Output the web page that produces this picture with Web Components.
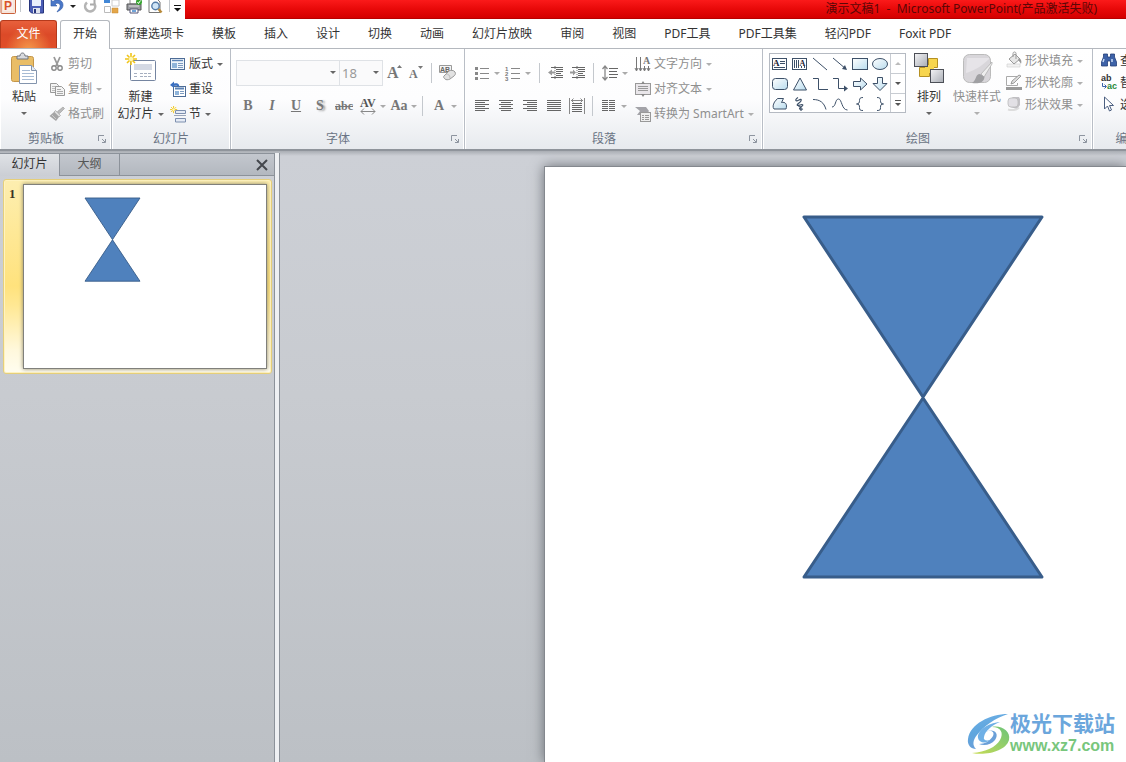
<!DOCTYPE html>
<html lang="zh-CN">
<head>
<meta charset="utf-8">
<title>演示文稿1 - Microsoft PowerPoint</title>
<style>
html, body { height: 100%; }
body { margin: 0; overflow: hidden; font: 12px/17px "Noto Sans", "Noto Sans CJK SC", sans-serif; color: #333; }
</style>
</head>
<body>
<ppt-app></ppt-app>
<script>
const lines = (rows, color = '#666') => rows.map(([x, y, w]) => `<path d="M${x} ${y + .5}h${w}" stroke="${color}"/>`).join('');
const SKY = `<linearGradient id="s" x2="1" y2="1"><stop stop-color="#fff"/><stop offset="1" stop-color="#b9dcee"/></linearGradient>`;
const GREY = `<linearGradient id="g" x2="1" y2="1"><stop stop-color="#f4f4f6"/><stop offset="1" stop-color="#a9adb5"/></linearGradient>`;
const SPARK = `<path d="M6 0v12M0 6h12M2 2l8 8M10 2l-8 8" stroke="#f0c419" stroke-width="1.6"/><circle cx="6" cy="6" r="2.2" fill="#fff7b0"/>`;
const INK = '#3d5068';

/* name: [width, height, markup] */
const ICONS = {
  logo: [16, 14, `<rect x="1" y="-2" width="14.5" height="15.5" rx="1" fill="#f7e4da" stroke="#c9603a"/><path d="M3 0h10v11H3z" fill="#fbeee6"/><text x="4" y="10" font-family="Liberation Sans" font-weight="bold" font-size="12" fill="#d9532a">P</text>`],
  save: [15, 14, `<path d="M.5-1h14v14H2.500l-2-2z" fill="#4a5cb5" stroke="#27357c"/><path d="M3-1h9v7H3z" fill="#e9eefb"/><path d="M4 8h7v5H4z" fill="#dfe3ee"/><path d="M5 9h2v4H5z" fill="#27357c"/>`],
  undo: [14, 14, `<path d="M1 0v6h6L5 4c3-2 6 0 5 3-.5 2-2 3-3 5 4-2 6-4 6-7C13 0 7-2 3 1.500z" fill="#4a78c8" stroke="#2e58a5" stroke-width=".6"/>`],
  redo: [14, 14, `<path d="M10.500 0v4.500H6" fill="none" stroke="#aaa" stroke-width="2"/><path d="M10.500 4A5 5 0 1 1 3 2.500" fill="none" stroke="#b4b4b4" stroke-width="2.600"/>`],
  blocks: [16, 14, `<path d="M0-1h6v4H0z" fill="#4287d6"/><path d="M8 0h7v6H8z" fill="#fff" stroke="#ccc"/><path d="M.5 6.500h6v6h-6z" fill="#fff" stroke="#bbb"/><path d="M8 8h6v5H8z" fill="#e4a649" stroke="#c78a32" stroke-width=".5"/>`],
  print: [16, 14, `<path d="M4-1h8v5H4z" fill="#fff" stroke="#888"/><path d="M1 4h14v6H1z" fill="#9b9ca2" stroke="#555"/><path d="M3 6h10" stroke="#ddd"/><path d="M4 9h8v4H4z" fill="#fff" stroke="#557"/><path d="M6 11h4" stroke="#6fa3d8" stroke-width="2"/><circle cx="13" cy="2" r="3" fill="#36a42f"/><path d="M11.500 2l1 1.500 2-3" stroke="#fff" fill="none"/>`],
  preview: [15, 14, `<path d="M1-1h8l3 3v10.500H1z" fill="#fff" stroke="#777"/><circle cx="7.500" cy="6" r="3.700" fill="#cfe5f7" stroke="#557ca8" stroke-width="1.400"/><path d="M10.500 9l3 3.500" stroke="#b88a3a" stroke-width="2.400"/>`],
  more: [7, 12, `<path d="M0 4.500h7" stroke="#111"/><path d="M0 7h7L3.500 10.500z" fill="#111"/>`],

  paste: [30, 32, `<rect x="2.500" y="3.500" width="22" height="25" rx="2" fill="#e9bd66" stroke="#c4964a"/><path d="M8 6V3h3c0-4 5-4 5 0h3v3z" fill="#d8dade" stroke="#70747c"/><path d="M10.500 12.500h12l5 5v13h-17z" fill="#fff" stroke="#8394ad"/><path d="M22.500 12.500v5h5" fill="#e4ebf5" stroke="#8394ad"/>${lines([[13,17,8],[13,20,12],[13,23,12],[13,26,12]], '#a7bbd4')}`],
  cut: [16, 16, `<path d="M5 1l4 9M11 1L7 10" stroke="#999" stroke-width="1.800"/><circle cx="5" cy="12" r="2.200" fill="none" stroke="#888" stroke-width="1.400"/><circle cx="11" cy="12" r="2.200" fill="none" stroke="#888" stroke-width="1.400"/>`],
  copy: [16, 16, `<path d="M1.500 2.500h6l2 2v7h-8z" fill="#f4f4f4" stroke="#999"/>${lines([[3,5,4],[3,7,4],[3,9,4]], '#bbb')}<path d="M6.500 5.500h6l3 3v6h-9z" fill="#f4f4f4" stroke="#999"/>${lines([[8,8,4],[8,10,6],[8,12,6]], '#aaa')}`],
  brush: [16, 16, `<path d="M14 1l1.500 1.500-5 5-2-2z" fill="#bbb" stroke="#999" stroke-width=".6"/><path d="M6.500 4.500l5 5-1.500 1.500-5-5z" fill="#ddd" stroke="#999" stroke-width=".6"/><path d="M5 6l5 5-3 4-6.500-5z" fill="#a5a5a5"/><path d="M3 9l4 4" stroke="#ccc"/>`],
  newslide: [32, 32, `<rect x="5.500" y="7.500" width="25" height="20" rx="1" fill="#fff" stroke="#7484a0"/><rect x="9" y="11" width="18" height="6" fill="#d4d9e4"/><path d="M9 20.500h4m2 0h12M9 23.500h4m2 0h12" stroke="#a6afc0" stroke-dasharray="3 1"/>${SPARK}`],
  layout: [16, 16, `<rect x=".5" y="2.500" width="14" height="11" fill="#eef4fb" stroke="#4d6c96"/><path d="M2 4.500h11" stroke="#5b83b6" stroke-width="1.400"/><path d="M2 7h5v5H2z" fill="#8fb4da"/>${lines([[8,7,5],[8,9,5],[8,11,5]], '#7d9bc0')}`],
  reset: [16, 16, `<rect x="3.500" y="5.500" width="12" height="10" fill="#fff" stroke="#4d6c96"/><path d="M5 7.500h9" stroke="#5b83b6" stroke-width="2"/><path d="M5 10h4v4H5z" fill="#8fb4da"/>${lines([[10,10,4],[10,12,4]], '#7d9bc0')}<path d="M0 4l4-3.500v2c4-1 6 1 5 4-1-2-3-2-5-1.500v2z" fill="#3a6fc0"/>`],
  section: [16, 16, `<g transform="scale(.6)">${SPARK}</g><path d="M5.500 3.500h10v3h-10zM5.500 11.500h10v3.500h-10z" transform="translate(0 1)" fill="#e5ebf5" stroke="#7d8fae"/><path d="M4 9.500h12" stroke="#9ba6ba"/>`],

  grow: [16, 18, `<text x="1" y="14" font-family="Liberation Serif" font-weight="bold" font-size="16" fill="#777">A</text><path d="M11 4h5l-2.500-3z" fill="#777"/>`],
  shrink: [16, 18, `<text x="1" y="14" font-family="Liberation Serif" font-weight="bold" font-size="12" fill="#777">A</text><path d="M10 2h5l-2.500 3z" fill="#777"/>`],
  clear: [18, 18, `<path d="M1.500 1.500h12v7h-12z" fill="#f4f4f4" stroke="#999"/><text x="2" y="8" font-family="Liberation Sans" font-weight="bold" font-size="7" fill="#666">AB</text><path d="M6 12l5-5c1-1 5-1 6 1s0 3-1 4l-4 3c-2 1-4 1-5 0s-2-2-1-3z" fill="#e2e2e2" stroke="#999"/><path d="M8 10c2 0 4 1 4 4" stroke="#bbb" fill="none"/>`],
  spacing: [18, 18, `<text x="1" y="10" font-family="Liberation Serif" font-size="12" fill="#555">AV</text><path d="M2 14.500h14M5 11.500l-3 3 3 3M13 11.500l3 3-3 3" stroke="#888" fill="none"/>`],

  bullets: [16, 16, [2,7,12].map(y => `<path d="M1 ${y}h3v3H1z" fill="#888"/><path d="M6 ${y + 1.500}h9" stroke="#888"/>`).join('')],
  numbers: [16, 16, [1,2,3].map(n => `<text x="0" y="${n * 5 + .5}" font-family="Liberation Sans" font-weight="bold" font-size="6" fill="#777">${n}</text><path d="M6 ${n * 5 - 1.500}h9" stroke="#888"/>`).join('')],
  outdent: [16, 16, `${lines([[3,2,12],[8,4,7],[8,6,7],[8,8,5],[8,10,7],[3,12,12]])}<path d="M7 1v14" stroke="#777" stroke-dasharray="1 1"/><path d="M0 7.500l4-3v2h3v2H4v2z" fill="#999"/>`],
  indent: [16, 16, `${lines([[2,2,13],[8,4,7],[8,6,7],[8,8,5],[8,10,7],[2,12,13]])}<path d="M7 1v14" stroke="#777" stroke-dasharray="1 1"/><path d="M6 7.500l-3-3v2H0v2h3v2z" fill="#999"/>`],
  linespace: [16, 16, `${lines([[7,3,9],[7,6,8],[7,9,9],[7,12,8]])}<path d="M3 1v14M.5 4L3 1l2.500 3M.5 12L3 15l2.500-3" stroke="#888" stroke-width="1.300" fill="none"/>`],
  left: [16, 16, lines([[1,2,14],[1,4,10],[1,6,14],[1,8,10],[1,10,14],[1,12,10]])],
  center: [16, 16, lines([[1,2,14],[3,4,10],[1,6,14],[3,8,10],[1,10,14],[3,12,10]])],
  right: [16, 16, lines([[1,2,14],[5,4,10],[1,6,14],[5,8,10],[1,10,14],[5,12,10]])],
  justify: [16, 16, lines([[1,2,14],[1,4,14],[1,6,14],[1,8,14],[1,10,14],[1,12,14]])],
  spread: [16, 16, `${lines([[3,5,10],[3,7,10],[3,9,10],[3,11,10],[3,13,10]])}<path d="M.5 0v16M15.500 0v16M2 2.500h12M4.500.5l-2 2 2 2M11.500.5l2 2-2 2" stroke="#888" fill="none"/>`],
  columns: [16, 16, lines([2,4,6,8,10,12].flatMap(y => [[1,y,6],[8,y,6]]))],
  textdir: [16, 16, `<path d="M1.500 1v13M5.500 1v13M9.500 10v4M13.500 10v4M0 12l1.500 3L3 12M4 12l1.500 3L7 12M8 12l1.500 3L11 12M12 12l1.500 3 1.500-3" stroke="#777" fill="none"/><text x="8" y="8" font-family="Liberation Serif" font-weight="bold" font-size="10" fill="#777">A</text>`],
  aligntext: [16, 16, `<rect x=".5" y="2.500" width="15" height="11" fill="#e9e6ea" stroke="#999"/>${lines([[3,5,10],[3,7,10],[3,9,10]], '#999')}<path d="M6 3l2-3 2 3zM6 13l2 3 2-3z" fill="#888"/>`],
  smartart: [16, 16, `<path d="M0 1h11l3 4-3 4H2l3-4z" fill="#a3a3a8"/><rect x="5.500" y="6.500" width="10" height="9" fill="#eee" stroke="#999"/>${lines([[7,9,2],[10,9,4],[7,11,2],[10,11,4],[7,13,2],[10,13,4]], '#999')}`],

  'g-text': [18, 16, `<rect x="1.500" y="2.500" width="14" height="11" fill="#fff" stroke="${INK}"/><text x="2" y="10" font-family="Liberation Serif" font-weight="bold" font-size="9" fill="#223">A</text>${lines([[9,5,5],[9,7,5],[3,11,11]], INK)}`],
  'g-vtext': [18, 16, `<rect x="1.500" y="2.500" width="14" height="11" fill="#fff" stroke="${INK}"/><path d="M3.500 4v8M5.500 4v8M7.500 4v8M10.500 10v2M13.500 10v2" stroke="${INK}"/><text x="8.500" y="10" font-family="Liberation Serif" font-weight="bold" font-size="8" fill="#223">A</text>`],
  'g-line': [18, 16, `<path d="M2 2l14 12" stroke="${INK}"/>`],
  'g-arrow': [18, 16, `<path d="M2 2l13 11" stroke="${INK}"/><path d="M16 14l-5-1 3-4z" fill="${INK}"/>`],
  'g-rect': [18, 16, `${SKY}<rect x="1.500" y="2.500" width="15" height="11" fill="url(#s)" stroke="${INK}"/>`],
  'g-oval': [18, 16, `${SKY}<ellipse cx="9" cy="8" rx="7.500" ry="5.500" fill="url(#s)" stroke="${INK}"/>`],
  'g-round': [18, 16, `${SKY}<rect x="1.500" y="2.500" width="15" height="11" rx="3" fill="url(#s)" stroke="${INK}"/>`],
  'g-tri': [18, 16, `${SKY}<path d="M9 2l6.500 12h-13z" fill="url(#s)" stroke="${INK}"/>`],
  'g-elbow': [18, 16, `<path d="M2 2.500h5.500v11H17" fill="none" stroke="${INK}"/>`],
  'g-elbowarrow': [18, 16, `<path d="M2 2.500h5.500v10H15" fill="none" stroke="${INK}"/><path d="M13 9.500l4 3-4 3z" fill="${INK}"/>`],
  'g-right': [18, 16, `${SKY}<path d="M2.500 5.500h7V2l6.500 6-6.500 6v-3.500h-7z" fill="url(#s)" stroke="${INK}"/>`],
  'g-down': [18, 16, `${SKY}<path d="M6.500 1.500h5v6H16L9 14.500 2 7.500h4.500z" fill="url(#s)" stroke="${INK}"/>`],
  'g-free': [18, 16, `${SKY}<path d="M3.500 6l3-3.500h6l-2 4c4-1 6 2 4.500 6.500h-12c-1.500-2-1-4 .5-7z" fill="url(#s)" stroke="${INK}"/>`],
  'g-scribble': [18, 16, `<path d="M7 1.500C3 4 5 6 8 4s3 1 0 3-2 3 1 2 4 0 1 2-1 3 2 2M7 10c4 0 3 3 3 5" fill="none" stroke="${INK}" stroke-width="1.200"/>`],
  'g-arc': [18, 16, `<path d="M2 3.500c7 0 11 3 13 10" fill="none" stroke="${INK}"/>`],
  'g-curve': [18, 16, `<path d="M1 11C5 11 4 3 7.500 3s3 11 9 11" fill="none" stroke="${INK}"/>`],
  'g-lbrace': [18, 16, `<path d="M12 1.500c-3 0-3.500 1-3.500 3S8 8 5.500 8C8 8 8.500 9 8.500 11.500s.5 3 3.500 3" fill="none" stroke="${INK}"/>`],
  'g-rbrace': [18, 16, `<path d="M6 1.500c3 0 3.500 1 3.500 3S10 8 12.500 8C10 8 9.500 9 9.500 11.500s-.5 3-3.500 3" fill="none" stroke="${INK}"/>`],
  arrange: [32, 32, `${GREY}<path d="M15.500 5.500h9v9h-9zM6.500 14.500h10v9h-10z" fill="#f7d54e" stroke="#b59022"/><path d="M12 12h9v8h-9z" fill="#f7d54e"/><rect x="1.500" y=".5" width="13" height="13" fill="url(#g)" stroke="#4c4f57"/><rect x="17.500" y="16.500" width="13" height="13" fill="url(#g)" stroke="#4c4f57"/>`],
  styles: [32, 32, `<rect x="2.500" y="1.500" width="27" height="28" rx="6" fill="#d8d6da" stroke="#bbb"/><path d="M5 20C12 18 20 14 28 6v-1H6z" fill="#e6e4e8"/><path d="M31 9L20 21l3 3 8-13z" fill="#eee" stroke="#aaa" stroke-width=".7"/><path d="M19 21c-5 0-3 6-8 9 6 1 12 0 12.500-6z" fill="#a0a0a3"/>`],
  fill: [16, 16, `<path d="M2 13h13v3H2z" transform="translate(-1 -1)" fill="#f2f2f2" stroke="#ccc" stroke-width=".6"/><path d="M3 7l6-5 5 5-6 5z" fill="#e6e6e6" stroke="#999"/><path d="M7 5V1.500c0-2 3-2 3 0V7" fill="none" stroke="#999"/><path d="M13 6c2 1 3 3 2 6-1-2-2-3-3-4z" fill="#999"/>`],
  outline: [16, 16, `<path d="M0 13h16v3H0z" fill="#999"/><path d="M11 2.500H.5v9h11V9" fill="none" stroke="#aaa"/><path d="M5 10l1-3 7-6 2 1-7 7z" fill="#ddd" stroke="#888" stroke-width=".8"/>`],
  effects: [16, 16, `<path d="M4 3l3-2h6l1 2v6l-3 4-7-2z" fill="#c2c0c5"/><rect x="2" y="2" width="10" height="9" rx="3" fill="#e2e0e5" stroke="#bbb" stroke-width=".8"/><path d="M2 13.500c3 1 9 1 11-2" stroke="#ddd" stroke-width="2" fill="none"/>`],
  find: [16, 16, `<path d="M2.500 2h4v3h3V2h4v3l2 5v4h-6V9h-3v5h-6v-4l2-5z" fill="#3d62a8" stroke="#253f78" stroke-width=".8"/><path d="M3 7l-1 3M11 7v3" stroke="#c9dbf5" stroke-width="1.500"/>`],
  replace: [16, 16, `<text x="0" y="7" font-family="Liberation Sans" font-weight="bold" font-size="9" fill="#333">ab</text><text x="6" y="15" font-family="Liberation Sans" font-weight="bold" font-size="9" fill="#2a8a3a">ac</text><path d="M1.500 9v3.500H5M3.500 10.500l2 2-2 2" stroke="#3b63a8" fill="none"/>`],
  pointer: [16, 16, `<path d="M3.500 1v12l3-3 2 5 2-1-2-4.500h4z" fill="#fff" stroke="#4c5f80"/>`],
  close: [12, 12, `<path d="M1 1l10 10M11 1L1 11" stroke="#44474d" stroke-width="2"/>`],
  launcher: [8, 8, `<path d="M.5 6V.5H6M4 4l3 3M7.500 4v3.500H4" fill="none" stroke="#8d949f"/>`],
  swirl: [44, 44, `<linearGradient id="w" x1="0" y1="0" x2=".3" y2="1"><stop stop-color="#6fb0e6"/><stop offset=".55" stop-color="#5fa6de"/><stop offset="1" stop-color="#6a9fd8"/></linearGradient><linearGradient id="v" x1="1" x2="0" y2="1"><stop stop-color="#6cc47a"/><stop offset="1" stop-color="#c9dc55"/></linearGradient><path d="M42 2C24 2 4 12 2 27c-1 6 3 10 8 10-4-4-3-9 1-14C18 14 29 6 42 2z" fill="url(#w)"/><path d="M34 10C21 11 11 19 12 26c1 5 8 6 12 2-4 1-7 0-6-3 1-6 8-12 16-15z" fill="#6fb0e6"/><path d="M20 20c5-3 9 0 7 4-3 5-8 8-14 8 5 2 12 1 16-4 5-7-2-12-9-8z" fill="#6a9fd8"/><path d="M26 15c9 0 12 6 8 13-4 7-14 12-28 13 14 3 34-2 37-13 2-9-8-15-17-13z" fill="url(#v)"/>`],
};

function define(name, html, setup) {
  const template = document.createElement('template');
  template.innerHTML = html;
  customElements.define(name, class extends HTMLElement {
    constructor() {
      super();
      this.attachShadow({ mode: 'open' }).append(template.content.cloneNode(true));
    }
    connectedCallback() { if (setup) setup(this, this.shadowRoot); }
  });
}

define('ui-icon', `<style>:host{display:block;flex:none}svg{display:block;overflow:visible}</style><svg fill="none" aria-hidden="true"></svg>`, (el, root) => {
  const [w, h, body] = ICONS[el.getAttribute('name')];
  const svg = root.querySelector('svg');
  svg.setAttribute('width', w);
  svg.setAttribute('height', h);
  svg.setAttribute('viewBox', `0 0 ${w} ${h}`);
  svg.innerHTML = body;
});

define('ui-arrow', `<style>:host{display:inline-block;flex:none;width:0;height:0;border:3px solid transparent;border-top-color:currentColor;border-bottom:0;vertical-align:middle}</style>`);

/* Separator between tools */
define('ui-sep', `<style>:host{display:block;flex:none;width:1px;height:20px;background:#c4c8cd}</style>`);

/* Icon above text, or icon beside text */
define('ribbon-button', `<style>
:host{display:block}
button{display:flex;align-items:center;gap:3px;height:var(--row,25px);padding:0 0 0 1px;border:0;background:none;font:inherit;color:#333;white-space:nowrap}
:host([large]) button{flex-direction:column;width:100%;height:auto;padding:5px 0 0}
:host([large]) .text{text-align:center;white-space:pre-line}
button:disabled{color:#8f8f8f}
ui-arrow{margin-left:4px;color:#666}
button:disabled ui-arrow{color:#b0b0b0}
:host(:not([menu])) ui-arrow{display:none}
:host([below]) ui-arrow{display:block;margin:7px auto 0}
</style><button type="button"><span class="text"><slot></slot><ui-arrow></ui-arrow></span></button>`, (el, root) => {
  const icon = document.createElement('ui-icon');
  icon.setAttribute('name', el.getAttribute('icon'));
  const button = root.querySelector('button');
  button.prepend(icon);
  button.disabled = el.hasAttribute('off');
});

/* Compact tool without a caption; its glyph is slotted */
define('tool-button', `<style>
:host{display:block;flex:none}
button{display:flex;align-items:center;height:24px;padding:0;border:0;background:none;color:#777;font:bold 14px/24px "Liberation Serif",serif}
.glyph{display:flex;justify-content:center;width:var(--tool,24px)}
ui-arrow{color:#aaa;margin-right:1px}
:host(:not([menu])) ui-arrow{display:none}
</style><button type="button" disabled><span class="glyph"><slot></slot></span><ui-arrow></ui-arrow></button>`, (el, root) => {
  root.querySelector('button').setAttribute('aria-label', el.getAttribute('label'));
});

define('ribbon-group', `<style>
:host{display:flex;flex-direction:column;flex:none;box-sizing:border-box;border-right:1px solid #b9bec6;box-shadow:inset -1px 0 #fff,inset 1px 0 #fff}
.body{display:flex;flex:none;height:80px}
footer{display:flex;align-items:center;gap:6px;height:21px;padding-right:5px;color:#6a7484}
button{display:block;padding:0;border:0;background:none}
:host([plain]) footer{padding:0}
:host([plain]) button{display:none}
.name{flex:1;text-align:center}
</style><div class="body"><slot></slot></div><footer><span class="name"></span><button type="button"><ui-icon name="launcher"></ui-icon></button></footer>`, (el, root) => {
  root.querySelector('.name').textContent = el.getAttribute('label');
  root.querySelector('button').setAttribute('aria-label', el.getAttribute('label') + '选项');
});

define('combo-box', `<style>
:host{display:block;flex:none}
label{display:flex;align-items:center;position:relative}
select{appearance:none;box-sizing:border-box;width:100%;height:26px;margin:0;padding:0 2px;border:1px solid #dfe2e6;border-radius:0;background:#fafafb;font:13px/17px "Noto Sans",sans-serif;color:#999;opacity:1}
ui-arrow{position:absolute;right:4px;top:11px;color:#666}
</style><label><select disabled><option></option></select><ui-arrow></ui-arrow></label>`, (el, root) => {
  root.querySelector('option').textContent = el.getAttribute('value');
  root.querySelector('select').setAttribute('aria-label', el.getAttribute('label'));
});

define('shape-gallery', `<style>
:host{display:flex;flex:none;box-sizing:border-box;height:60px;border:1px solid #b5bac2;background:#fff}
.cells{display:grid;grid-template-columns:repeat(6,20px);grid-auto-rows:20px}
.scroll{display:grid;grid-template-rows:20px 20px 18px;width:14px;border-left:1px solid #c8ccd2}
button{display:grid;place-items:center;padding:0;border:0;background:none;color:#555}
.scroll button{border-bottom:1px solid #c8ccd2}
.scroll button:last-child{border-bottom:0}
.up{transform:rotate(180deg);color:#bbb}
.all{display:grid;border-top:1px solid;padding-top:2px}
</style><div class="cells"></div><div class="scroll"><button type="button" aria-label="上一行"><ui-arrow class="up"></ui-arrow></button><button type="button" aria-label="下一行"><ui-arrow></ui-arrow></button><button type="button" aria-label="其他"><span class="all"><ui-arrow></ui-arrow></span></button></div>`, (el, root) => {
  const names = 'text vtext line arrow rect oval round tri elbow elbowarrow right down free scribble arc curve lbrace rbrace'.split(' ');
  root.querySelector('.cells').innerHTML = names.map(n => `<button type="button" aria-label="${n}"><ui-icon name="g-${n}"></ui-icon></button>`).join('');
});

define('title-bar', `<style>
:host{display:flex;flex:none;height:19px;overflow:hidden;background:#fff}
.quick{display:flex;flex:none;box-sizing:border-box;width:185px;height:15px;background:#fff}
button{display:block;padding:0;border:0;background:none;height:14px;flex:none}
.quick ui-sep{height:12px}
ui-arrow{color:#222}
h1{flex:1;margin:0;padding-right:29px;text-align:right;white-space:pre;font:inherit;line-height:17px;color:#5c0606;background:linear-gradient(#fb1a1a,#e80909 50%,#d40000);border-bottom:1px solid #b80000}
.a{margin-right:4px}.b{margin-right:8px}.c{margin-right:6px}.d{margin:5px 8px 0 0}
</style><div class="quick">
<button class="a" type="button" aria-label="PowerPoint"><ui-icon name="logo"></ui-icon></button><ui-sep class="b"></ui-sep>
<button class="c" type="button" aria-label="保存"><ui-icon name="save"></ui-icon></button>
<button class="c" type="button" aria-label="撤消"><ui-icon name="undo"></ui-icon></button><ui-arrow class="d"></ui-arrow>
<button class="c" type="button" aria-label="恢复"><ui-icon name="redo"></ui-icon></button>
<button class="c" type="button" aria-label="版式"><ui-icon name="blocks"></ui-icon></button>
<button class="c" type="button" aria-label="打印"><ui-icon name="print"></ui-icon></button>
<button class="c" type="button" aria-label="预览"><ui-icon name="preview"></ui-icon></button><ui-sep class="a"></ui-sep>
<button type="button" aria-label="自定义"><ui-icon name="more"></ui-icon></button></div>
<h1><slot></slot></h1>`);

define('ribbon-tab', `<style>
:host{display:block;flex:none;height:28px}
button{display:block;box-sizing:border-box;height:28px;padding:0 14px 2px;border:0;background:none;font:inherit;color:#333;white-space:nowrap}
:host([file]) button{width:57px;margin-right:3px;color:#fff;border:1px solid #b53a1c;border-bottom:0;border-radius:3px 3px 0 0;background:radial-gradient(ellipse at 50% 110%,#f59a4c,transparent 60%),linear-gradient(#e8603c,#dc4a28 50%,#e04e28)}
:host([selected]) button{height:29px;padding:0 12px 4px;border:1px solid #b4b8be;border-bottom:0;border-radius:3px 3px 0 0;background:#fff}
</style><button type="button" role="tab"><slot></slot></button>`, (el, root) => {
  root.querySelector('button').setAttribute('aria-selected', el.hasAttribute('selected'));
});

define('ribbon-tabs', `<style>:host{display:flex;flex:none;height:28px;padding-top:1px;margin-bottom:-1px;position:relative;border-bottom:1px solid #b4b8be;background:#fff}</style><slot></slot>`);

define('hour-glass', `<style>:host{display:block}svg{display:block;width:100%;overflow:visible}</style>
<svg viewBox="0 0 238 360" role="img" aria-label="两个三角形"><path d="M0 0h238L119 180zM119 181l119 179H0z" fill="#4f81bd" stroke="#385d8a" stroke-linejoin="round"/></svg>`, (el, root) => {
  root.querySelector('path').setAttribute('stroke-width', el.getAttribute('line'));
});

define('slide-pane', `<style>
:host{display:flex;flex-direction:column;flex:none;box-sizing:border-box;width:275px;border-right:1px solid #8c929a}
.tabs{display:flex;box-sizing:border-box;height:23px;border-top:1px solid #8c929a;border-bottom:1px solid #8c929a;background:linear-gradient(#c3c7ce,#b3b8bf)}
.tabs button{box-sizing:border-box;width:60px;padding:0 0 2px;border:0;border-right:1px solid #8c929a;background:none;font:inherit;color:#555}
.tabs .on{height:22px;padding-bottom:4px;color:#333;background:linear-gradient(#dfe2e6,#cbced4)}
.tabs .close{display:grid;place-items:center;width:24px;padding:0;margin-left:auto;border:0}
.item{display:flex;gap:6px;margin:3px 2px 0 3px;padding:4px 4px 4px 5px;border:1px solid #e6cf7a;border-radius:3px;background:linear-gradient(#fdeeb0,#ffe27d 55%,#ffe894 65%,#fff8dc 88%,#fffdf0);box-shadow:inset 0 0 0 1px #fff3c0}
.num{width:8px;font:bold 13px/20px "Liberation Serif",serif;color:#3a3222}
.thumb{flex:1;box-sizing:border-box;height:185px;padding:13px 0 0 61px;border:1px solid #80807c;background:#fff;box-shadow:0 0 4px #8a8468}
hour-glass{width:55px}
</style><div class="tabs" role="tablist"><button class="on" type="button" role="tab">幻灯片</button><button type="button" role="tab">大纲</button><button class="close" type="button" aria-label="关闭"><ui-icon name="close"></ui-icon></button></div>
<div class="item"><span class="num">1</span><div class="thumb"><hour-glass line="4"></hour-glass></div></div>`);

define('slide-stage', `<style>
:host{display:flex;flex:1;min-width:0;overflow:hidden;padding:13px 0 0 264px}
.slide{flex:1;border:1px solid #84888e;border-width:1px 0 0 1px;background:#fff;box-shadow:0 0 12px #6b6f75;padding:50px 0 0 259px}
hour-glass{width:238px}
</style><div class="slide"><hour-glass line="3"></hour-glass></div>`);

define('site-mark', `<style>
:host{display:flex;position:absolute;right:11px;bottom:6px;font-family:"Noto Sans CJK SC",sans-serif}
ui-icon{margin-top:4px}
p{margin:0;font-weight:bold;font-size:21px;line-height:28px;color:#6ba6dc;white-space:nowrap}
a{display:block;font:bold 16px/20px "Liberation Sans",sans-serif;color:#78c67c;text-decoration:none}
</style><ui-icon name="swirl"></ui-icon><div><p>极光下载站</p><a href="#">www.xz7.com</a></div>`);

define('ppt-app', `<style>
:host{display:flex;flex-direction:column;height:100vh;overflow:hidden;position:relative}
.ribbon{display:flex;flex:none;overflow:hidden;border-bottom:2px solid #8f949b;background:linear-gradient(#fff,#fdfdfe 50%,#e7eaee)}
.col{padding-top:3px}
.tight{padding-top:1px;--row:22px}
.rows{display:grid;grid-template-rows:26px 24px;row-gap:8px;padding:12px 0 0 5px;align-content:start}
.row{display:flex;align-items:center}
.work{display:flex;flex:1;min-height:0;padding-top:2px;background:linear-gradient(#a9adb3,#cdd0d6 5px,#c8cbd0 40%,#bcc0c5)}
.split{flex:none;width:4px;border-right:1px solid #8c929a;background:#eef0f3}
.clip{width:112px}.slides{width:119px}.font{width:234px}.paragraph{width:298px}.draw{width:330px}.edit{width:70px}
.w48{width:48px}.w57{width:57px}.w40{width:40px}.w56{width:56px}
.narrow{--tool:22px}
.m4{margin:0 4px}.m6{margin:0 5px 0 7px}
i,u,s{font-weight:inherit}
.shadow{text-shadow:2px 1px 2px #999}
.abc{font-size:12px}
.texts{width:164px}
.family{width:104px}.size{width:44px;margin-left:-1px}
shape-gallery{margin:5px 3px 0 6px}
.edits{padding-left:7px}
</style>
<title-bar>演示文稿1  -  Microsoft PowerPoint(产品激活失败)</title-bar>
<ribbon-tabs role="tablist"><ribbon-tab file>文件</ribbon-tab><ribbon-tab selected>开始</ribbon-tab><ribbon-tab>新建选项卡</ribbon-tab><ribbon-tab>模板</ribbon-tab><ribbon-tab>插入</ribbon-tab><ribbon-tab>设计</ribbon-tab><ribbon-tab>切换</ribbon-tab><ribbon-tab>动画</ribbon-tab><ribbon-tab>幻灯片放映</ribbon-tab><ribbon-tab>审阅</ribbon-tab><ribbon-tab>视图</ribbon-tab><ribbon-tab>PDF工具</ribbon-tab><ribbon-tab>PDF工具集</ribbon-tab><ribbon-tab>轻闪PDF</ribbon-tab><ribbon-tab>Foxit PDF</ribbon-tab></ribbon-tabs>
<div class="ribbon">
<ribbon-group class="clip" label="剪贴板"><ribbon-button class="w48" large below menu icon="paste">粘贴</ribbon-button><div class="col"><ribbon-button off icon="cut">剪切</ribbon-button><ribbon-button off menu icon="copy">复制</ribbon-button><ribbon-button off icon="brush">格式刷</ribbon-button></div></ribbon-group>
<ribbon-group class="slides" plain label="幻灯片"><ribbon-button class="w57" large menu icon="newslide">新建
幻灯片</ribbon-button><div class="col"><ribbon-button menu icon="layout">版式</ribbon-button><ribbon-button icon="reset">重设</ribbon-button><ribbon-button menu icon="section">节</ribbon-button></div></ribbon-group>
<ribbon-group class="font" label="字体"><div class="rows">
<div class="row narrow"><combo-box class="family" label="字体" value=""></combo-box><combo-box class="size" label="字号" value="18"></combo-box><tool-button label="增大字号"><ui-icon name="grow"></ui-icon></tool-button><tool-button label="减小字号"><ui-icon name="shrink"></ui-icon></tool-button><ui-sep class="m4"></ui-sep><tool-button label="清除格式"><ui-icon name="clear"></ui-icon></tool-button></div>
<div class="row"><tool-button label="加粗">B</tool-button><tool-button label="倾斜"><i>I</i></tool-button><tool-button label="下划线"><u>U</u></tool-button><tool-button label="阴影"><span class="shadow">S</span></tool-button><tool-button label="删除线"><s class="abc">abc</s></tool-button><tool-button menu label="字符间距"><ui-icon name="spacing"></ui-icon></tool-button><tool-button menu label="更改大小写">Aa</tool-button><ui-sep class="m4"></ui-sep><tool-button menu label="字体颜色">A</tool-button></div></div></ribbon-group>
<ribbon-group class="paragraph" label="段落"><div class="rows texts">
<div class="row"><tool-button menu label="项目符号"><ui-icon name="bullets"></ui-icon></tool-button><tool-button menu label="编号"><ui-icon name="numbers"></ui-icon></tool-button><ui-sep class="m6"></ui-sep><tool-button class="narrow" label="减少缩进"><ui-icon name="outdent"></ui-icon></tool-button><tool-button class="narrow" label="增加缩进"><ui-icon name="indent"></ui-icon></tool-button><ui-sep class="m4"></ui-sep><tool-button menu label="行距"><ui-icon name="linespace"></ui-icon></tool-button></div>
<div class="row"><tool-button label="左对齐"><ui-icon name="left"></ui-icon></tool-button><tool-button label="居中"><ui-icon name="center"></ui-icon></tool-button><tool-button label="右对齐"><ui-icon name="right"></ui-icon></tool-button><tool-button label="两端对齐"><ui-icon name="justify"></ui-icon></tool-button><tool-button class="narrow" label="分散对齐"><ui-icon name="spread"></ui-icon></tool-button><ui-sep class="m4"></ui-sep><tool-button menu label="分栏"><ui-icon name="columns"></ui-icon></tool-button></div></div>
<div class="col"><ribbon-button off menu icon="textdir">文字方向</ribbon-button><ribbon-button off menu icon="aligntext">对齐文本</ribbon-button><ribbon-button off menu icon="smartart">转换为 SmartArt</ribbon-button></div></ribbon-group>
<ribbon-group class="draw" label="绘图"><shape-gallery></shape-gallery><ribbon-button class="w40" large below menu icon="arrange">排列</ribbon-button><ribbon-button class="w56" off large below menu icon="styles">快速样式</ribbon-button><div class="tight"><ribbon-button off menu icon="fill">形状填充</ribbon-button><ribbon-button off menu icon="outline">形状轮廓</ribbon-button><ribbon-button off menu icon="effects">形状效果</ribbon-button></div></ribbon-group>
<ribbon-group class="edit" plain label="编辑"><div class="tight edits"><ribbon-button icon="find">查找</ribbon-button><ribbon-button menu icon="replace">替换</ribbon-button><ribbon-button menu icon="pointer">选择</ribbon-button></div></ribbon-group>
</div>
<div class="work"><slide-pane></slide-pane><div class="split"></div><slide-stage></slide-stage></div>
<site-mark></site-mark>`);
</script>
</body>
</html>
